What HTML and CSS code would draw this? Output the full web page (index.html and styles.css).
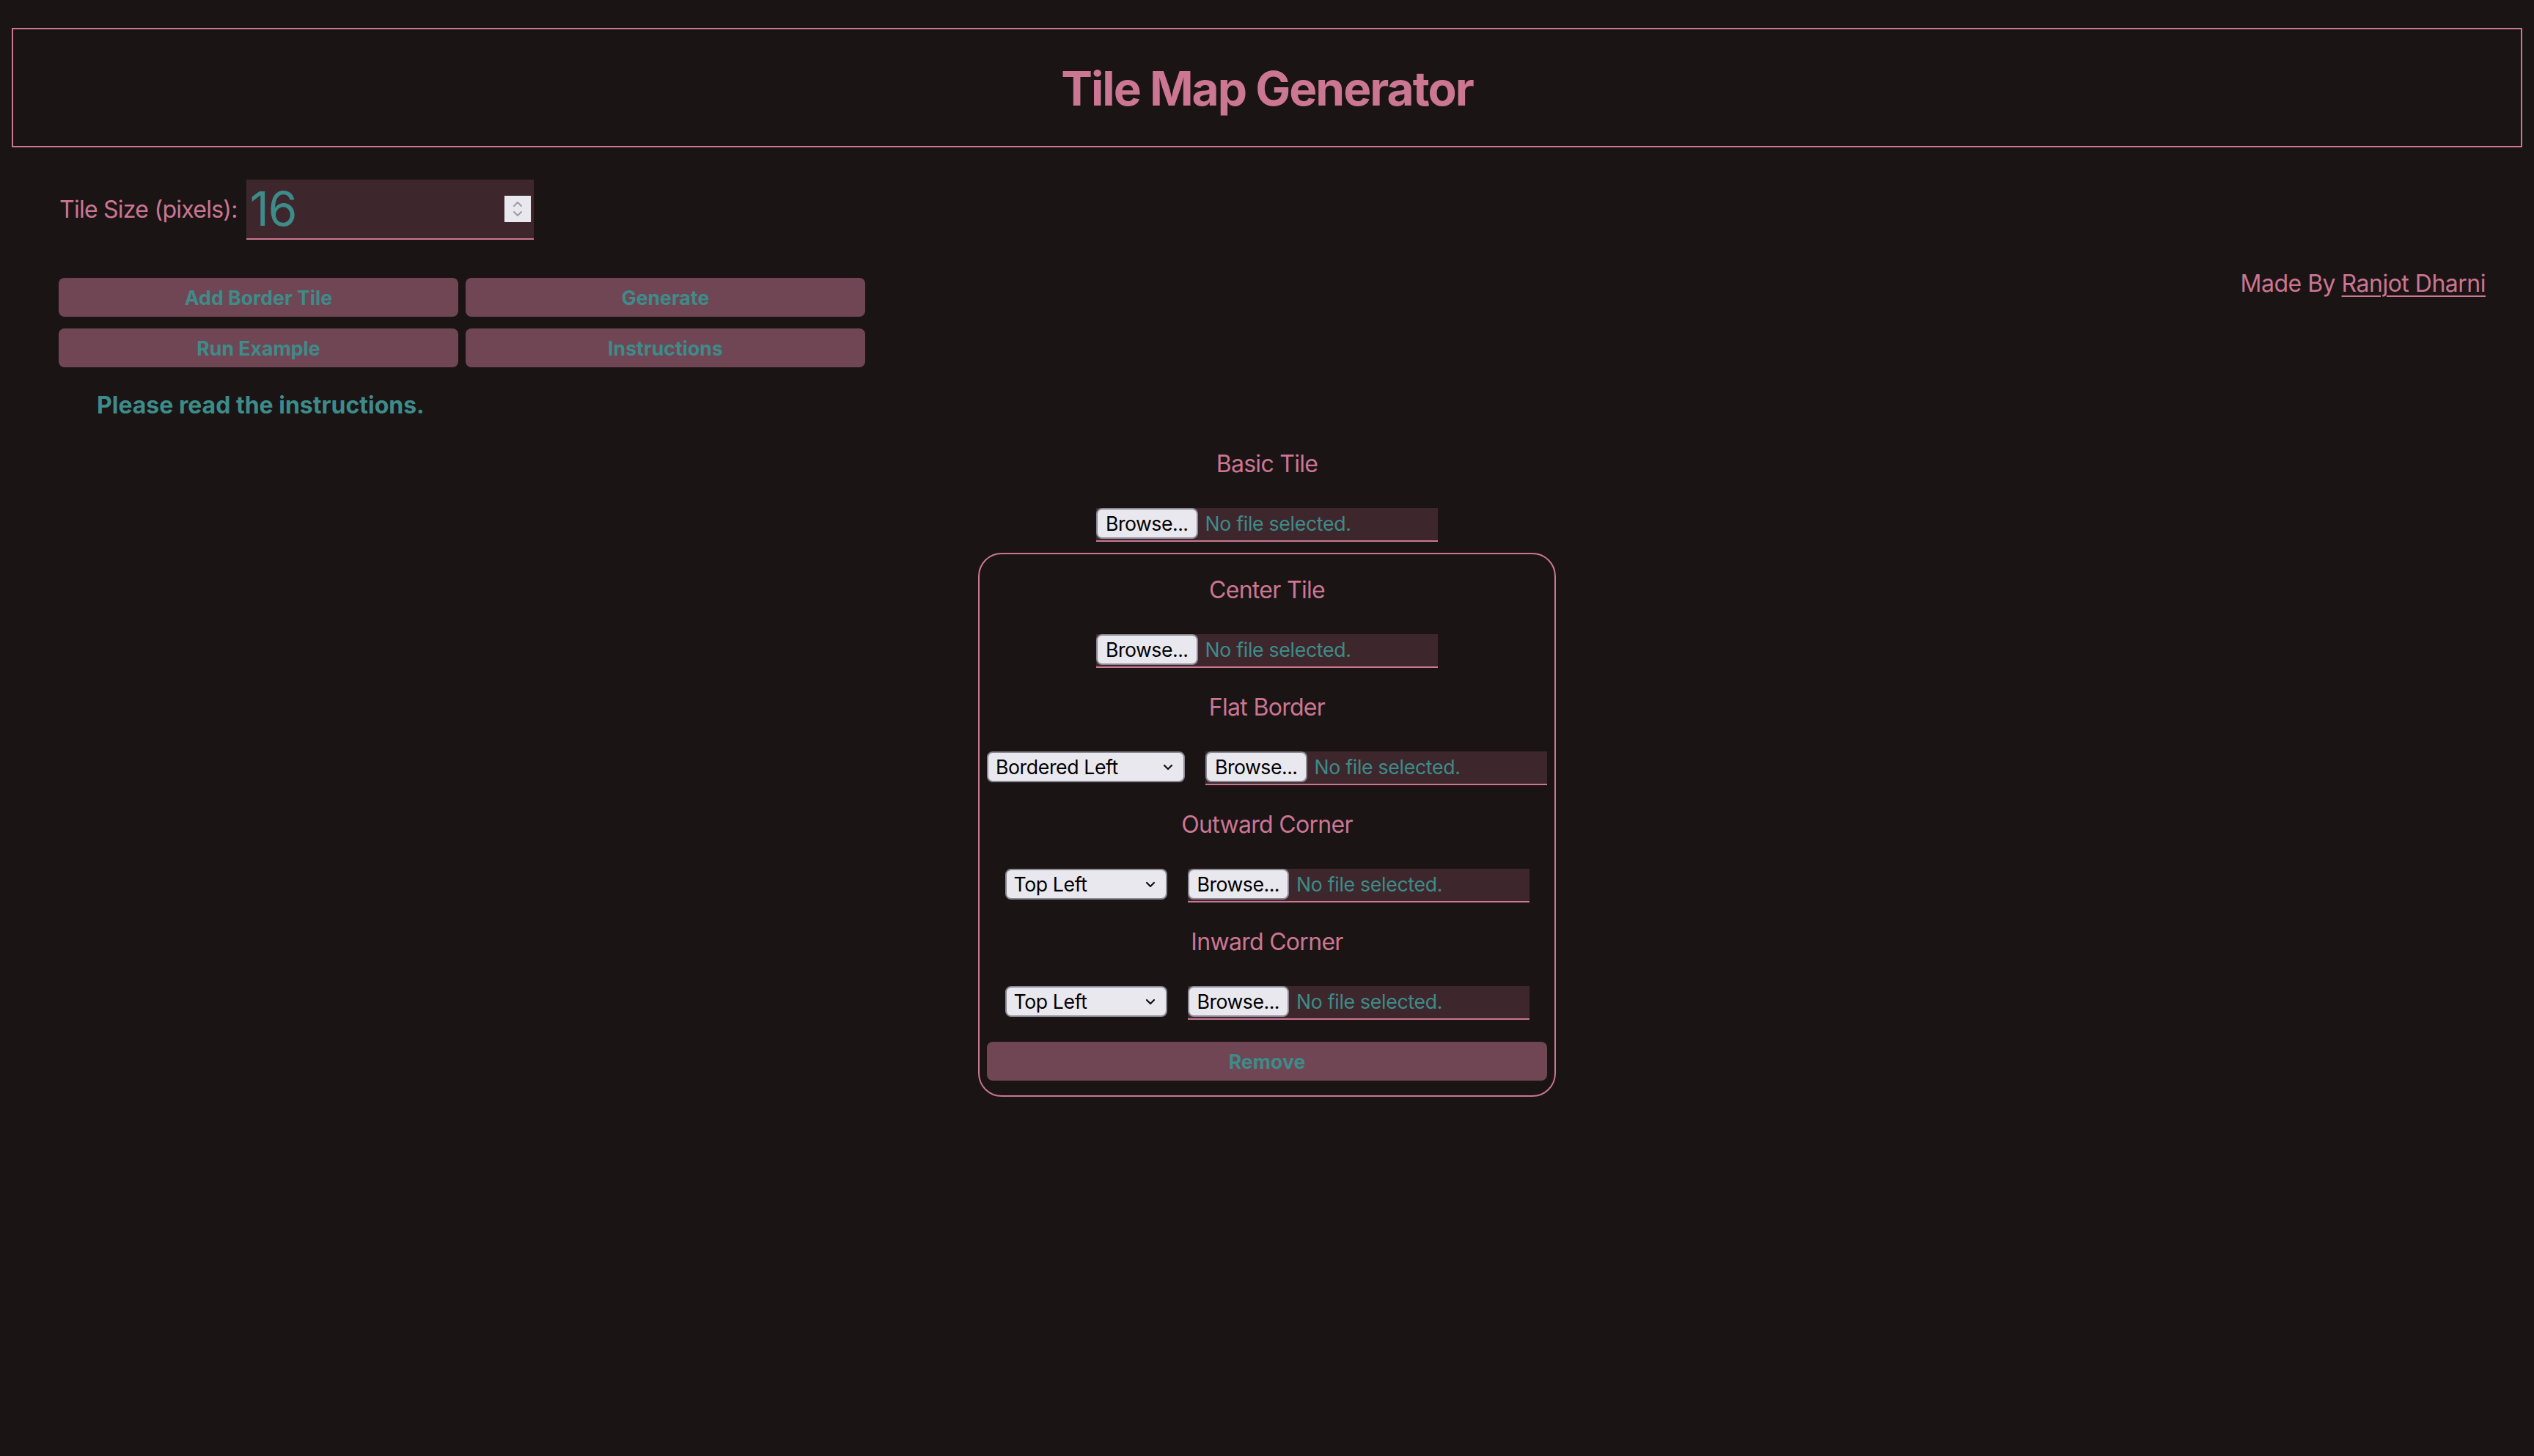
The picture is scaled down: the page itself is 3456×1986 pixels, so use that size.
FILE: index.html
```html
<!DOCTYPE html>
<html lang="en">
<head>
<meta charset="utf-8">
<title>Tile Map Generator</title>
<link rel="stylesheet" href="styles.css">
</head>
<body>
<header class="masthead">
  <h1 class="masthead__title">Tile Map Generator</h1>
</header>
<main class="workspace">
  <div class="toolbar">
    <div class="controls">
      <div class="size-row">
        <label class="size-label">Tile Size (pixels):</label>
        <div class="number-input">
          <span class="number-input__value">16</span>
          <span class="spinner">
            <svg class="spinner__icon" viewBox="0 0 14 26" width="14" height="26">
              <polyline points="2,9 7,4 12,9" fill="none" stroke="#9c9ba6" stroke-width="2" stroke-linecap="round" stroke-linejoin="round"/>
              <polyline points="2,17 7,22 12,17" fill="none" stroke="#9c9ba6" stroke-width="2" stroke-linecap="round" stroke-linejoin="round"/>
            </svg>
          </span>
        </div>
      </div>
      <div class="actions">
        <button class="action">Add Border Tile</button>
        <button class="action">Generate</button>
        <button class="action">Run Example</button>
        <button class="action">Instructions</button>
      </div>
      <p class="notice">Please read the instructions.</p>
    </div>
    <p class="credit">Made By <a class="credit__link" href="#">Ranjot Dharni</a></p>
  </div>

  <section class="tiles">
    <p class="tile-label">Basic Tile</p>
    <div class="file-field">
      <span class="browse">Browse...</span>
      <span class="file-field__status">No file selected.</span>
    </div>

    <div class="panel">
      <div class="panel-section">
        <p class="tile-label">Center Tile</p>
        <div class="field-row">
          <div class="file-field">
            <span class="browse">Browse...</span>
            <span class="file-field__status">No file selected.</span>
          </div>
        </div>
      </div>

      <div class="panel-section">
        <p class="tile-label">Flat Border</p>
        <div class="field-row">
          <div class="select select--wide">
            <span>Bordered Left</span>
            <svg class="select__chevron" viewBox="0 0 14 9" width="14" height="9"><polyline points="2,2 7,7 12,2" fill="none" stroke="#111" stroke-width="2.2" stroke-linecap="round" stroke-linejoin="round"/></svg>
          </div>
          <div class="file-field">
            <span class="browse">Browse...</span>
            <span class="file-field__status">No file selected.</span>
          </div>
        </div>
      </div>

      <div class="panel-section">
        <p class="tile-label">Outward Corner</p>
        <div class="field-row">
          <div class="select select--narrow">
            <span>Top Left</span>
            <svg class="select__chevron" viewBox="0 0 14 9" width="14" height="9"><polyline points="2,2 7,7 12,2" fill="none" stroke="#111" stroke-width="2.2" stroke-linecap="round" stroke-linejoin="round"/></svg>
          </div>
          <div class="file-field">
            <span class="browse">Browse...</span>
            <span class="file-field__status">No file selected.</span>
          </div>
        </div>
      </div>

      <div class="panel-section">
        <p class="tile-label">Inward Corner</p>
        <div class="field-row">
          <div class="select select--narrow">
            <span>Top Left</span>
            <svg class="select__chevron" viewBox="0 0 14 9" width="14" height="9"><polyline points="2,2 7,7 12,2" fill="none" stroke="#111" stroke-width="2.2" stroke-linecap="round" stroke-linejoin="round"/></svg>
          </div>
          <div class="file-field">
            <span class="browse">Browse...</span>
            <span class="file-field__status">No file selected.</span>
          </div>
        </div>
      </div>

      <button class="action action--remove">Remove</button>
    </div>
  </section>
</main>
</body>
</html>
```

FILE: styles.css
```css
html {
  background: #1a1415;
}

body {
  margin: 0;
  padding: 38px 16px 0;
  min-height: 1986px;
  box-sizing: border-box;
  background: #1a1415;
  font-family: Inter, "Noto Sans", "Liberation Sans", sans-serif;
  color: #cb7692;
}

.masthead {
  border: 2px solid #cb7692;
  padding: 42px 0 39px;
  text-align: center;
}

.masthead__title {
  margin: 0;
  font-size: 64px;
  line-height: 78px;
  font-weight: 700;
  letter-spacing: -2px;
  color: #cb7692;
}

.workspace {
  padding-top: 44px;
}

.toolbar {
  display: flex;
  justify-content: space-between;
  align-items: flex-start;
  padding: 0 50px 0 64px;
}

.controls {
  display: flex;
  flex-direction: column;
  align-items: flex-start;
}

.size-row {
  display: flex;
  align-items: center;
  gap: 12px;
  padding-left: 1px;
}

.size-label {
  font-size: 32px;
  line-height: 40px;
  letter-spacing: -0.75px;
  color: #cb7692;
}

.number-input {
  width: 392px;
  height: 82px;
  box-sizing: border-box;
  border-bottom: 2px solid #cb7692;
  background: #3d272d;
  display: flex;
  align-items: center;
  padding: 0 4px 0 5px;
}

.number-input__value {
  flex: 1;
  font-size: 64px;
  line-height: 64px;
  letter-spacing: -1px;
  color: #3d8c8a;
}

.spinner {
  width: 36px;
  height: 36px;
  background: #e9e8ee;
  display: flex;
  align-items: center;
  justify-content: center;
}

.actions {
  display: grid;
  grid-template-columns: 545px 545px;
  grid-auto-rows: 53px;
  gap: 16px 10px;
  margin-top: 52px;
}

.action {
  border: 0;
  border-radius: 8px;
  background: #704654;
  color: #3d8c8a;
  font-family: Inter, "Noto Sans", "Liberation Sans", sans-serif;
  font-size: 26.67px;
  font-weight: 700;
  padding: 0;
}

.notice {
  margin: 32px 0 0 52px;
  font-size: 32px;
  line-height: 40px;
  font-weight: 700;
  color: #3d8c8a;
}

.credit {
  margin: 122px 0 0;
  font-size: 32px;
  line-height: 40px;
  letter-spacing: -0.5px;
  color: #cb7692;
}

.credit__link {
  color: inherit;
  text-decoration: underline;
  text-decoration-thickness: 2px;
  text-underline-offset: 5px;
}

.tiles {
  display: flex;
  flex-direction: column;
  align-items: center;
  margin-top: 40px;
}

.tile-label {
  margin: 0 0 40px;
  font-size: 32px;
  line-height: 40px;
  letter-spacing: -0.7px;
  text-align: center;
  color: #cb7692;
}

.file-field {
  width: 466px;
  height: 46px;
  box-sizing: border-box;
  border-bottom: 2px solid #cb7692;
  background: #3d272d;
  display: flex;
  align-items: flex-start;
}

.browse {
  height: 42px;
  box-sizing: border-box;
  padding: 0 11px;
  border: 2px solid #8b8a94;
  border-radius: 8px;
  background: #e9e8ee;
  color: #000;
  font-size: 26.67px;
  line-height: 38px;
  letter-spacing: -0.5px;
}

.file-field__status {
  margin-left: 10px;
  font-size: 26.67px;
  line-height: 42px;
  letter-spacing: -0.3px;
  color: #3d8c8a;
}

.panel {
  margin-top: 15px;
  width: 788px;
  box-sizing: border-box;
  border: 2px solid #cb7692;
  border-radius: 32px;
  padding: 29px 10px 20px;
  display: flex;
  flex-direction: column;
  align-items: center;
}

.panel-section {
  display: flex;
  flex-direction: column;
  align-items: center;
}

.panel-section + .panel-section {
  margin-top: 34px;
}

.field-row {
  display: flex;
  align-items: flex-start;
  gap: 28px;
}

.select {
  height: 42px;
  box-sizing: border-box;
  border: 2px solid #8b8a94;
  border-radius: 8px;
  background: #e9e8ee;
  color: #000;
  font-size: 26.67px;
  line-height: 38px;
  letter-spacing: -0.4px;
  display: flex;
  align-items: center;
  justify-content: space-between;
  padding: 0 14px 0 10px;
}

.select--wide {
  width: 270px;
}

.select--narrow {
  width: 221px;
}

.action--remove {
  align-self: stretch;
  height: 53px;
  margin-top: 30px;
}
```
